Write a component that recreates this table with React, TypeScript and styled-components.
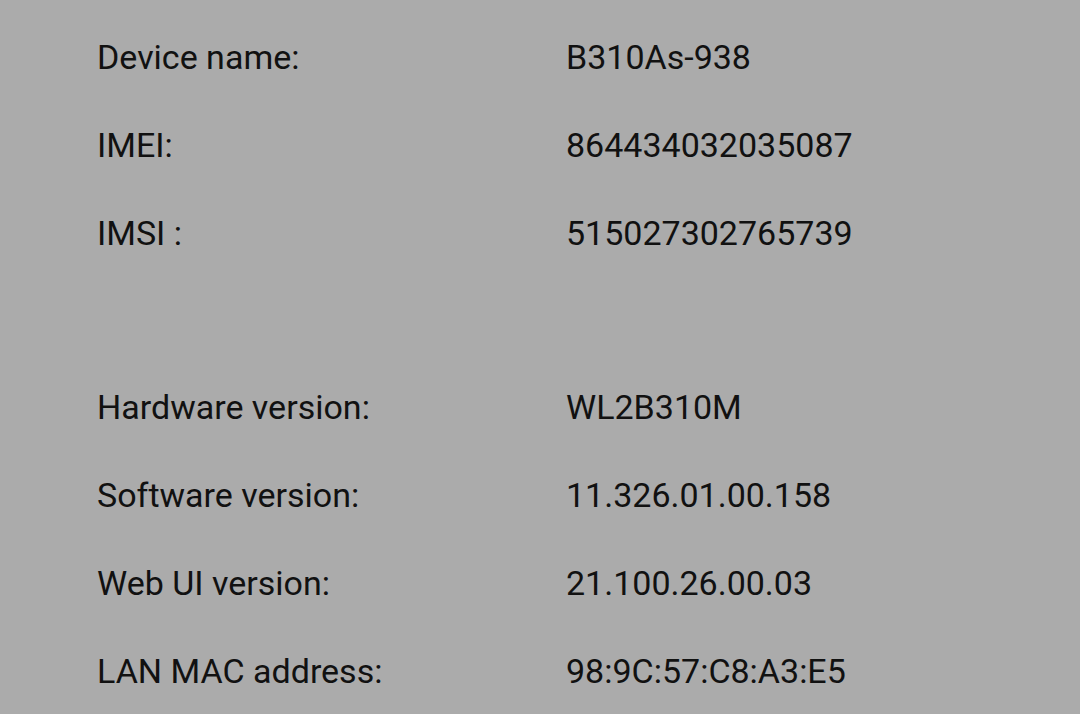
import React from "react";
import styled, { createGlobalStyle } from "styled-components";

const Global = createGlobalStyle`
  html, body { margin: 0; padding: 0; background: #ababab; }
  body { font-family: Roboto, "Noto Sans", sans-serif; }
`;

const Page = styled.div`
  width: 1080px;
  height: 714px;
  background: #ababab;
  padding: 13px 0 0 97px;
  box-sizing: border-box;
  overflow: hidden;
`;

const Group = styled.div<{ $gapAfter?: number }>`
  display: flex;
  flex-direction: column;
  margin-bottom: ${(p) => p.$gapAfter ?? 0}px;
`;

const Row = styled.div`
  display: grid;
  grid-template-columns: 469px 1fr;
  height: 88px;
  align-items: center;
  font-size: 34px;
  line-height: 88px;
  color: #111111;
`;

const Label = styled.span``;
const Value = styled.span``;

const top: [string, string][] = [
  ["Device name:", "B310As-938"],
  ["IMEI:", "864434032035087"],
  ["IMSI :", "515027302765739"],
];
const bottom: [string, string][] = [
  ["Hardware version:", "WL2B310M"],
  ["Software version:", "11.326.01.00.158"],
  ["Web UI version:", "21.100.26.00.03"],
  ["LAN MAC address:", "98:9C:57:C8:A3:E5"],
];

export default function App() {
  return (
    <>
      <Global />
      <Page>
        <Group $gapAfter={86}>
          {top.map(([l, v]) => (
            <Row key={l}>
              <Label>{l}</Label>
              <Value>{v}</Value>
            </Row>
          ))}
        </Group>
        <Group>
          {bottom.map(([l, v]) => (
            <Row key={l}>
              <Label>{l}</Label>
              <Value>{v}</Value>
            </Row>
          ))}
        </Group>
      </Page>
    </>
  );
}
